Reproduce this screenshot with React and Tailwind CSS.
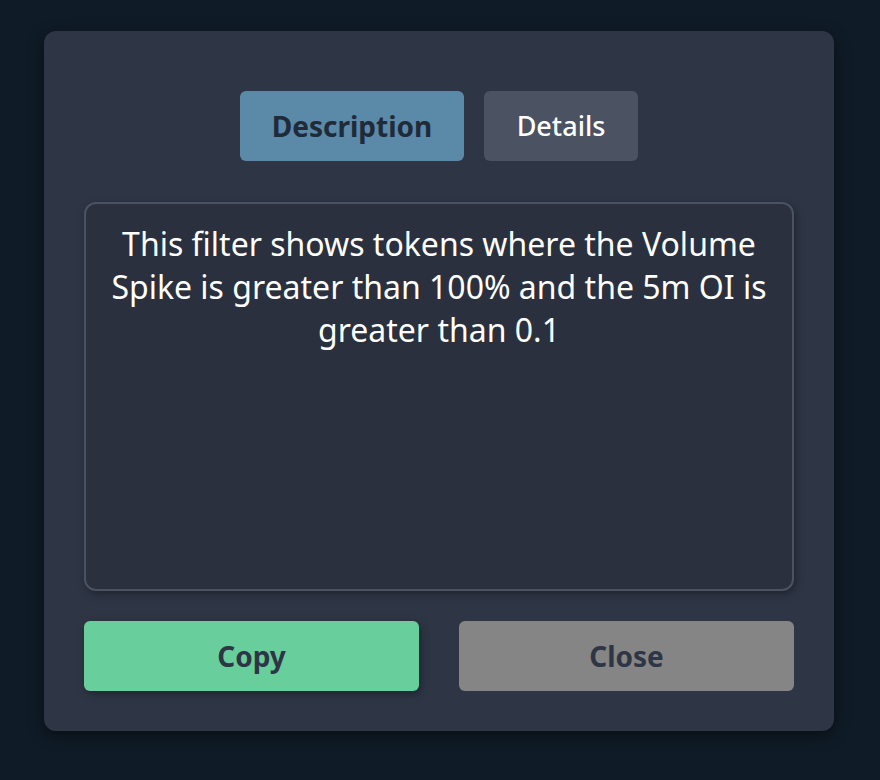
const App = () => {
  return (
    <div className="min-h-[780px] w-full bg-[#0f1b26] pt-[31px] pl-[44px]" style={{ fontFamily: '"Noto Sans", "Open Sans", sans-serif' }}>
      <div className="w-[790px] h-[700px] rounded-[12px] bg-[#2e3646] shadow-[0_4px_16px_rgba(0,0,0,0.45)] px-[40px] pt-[60px] pb-[40px] flex flex-col">
        {/* Tabs */}
        <div className="flex justify-center gap-[20px]">
          <button className="h-[70px] w-[224px] rounded-[6px] bg-[#5b89a8] text-[28px] font-bold text-[#1f2b38]">
            Description
          </button>
          <button className="h-[70px] w-[154px] rounded-[6px] bg-[#4b5262] text-[27px] font-medium text-white">
            Details
          </button>
        </div>

        {/* Description box */}
        <div className="mt-[41px] h-[389px] rounded-[12px] border-2 border-[#4b5262] bg-[#2a303d] shadow-[2px_3px_8px_rgba(0,0,0,0.35)] px-[8px] pt-[18px]">
          <p className="text-center text-[32px] leading-[43px] text-white">
            This filter shows tokens where the Volume Spike is greater than 100% and the 5m OI is greater than 0.1
          </p>
        </div>

        {/* Actions */}
        <div className="mt-[30px] grid grid-cols-2 gap-[40px]">
          <button className="h-[70px] rounded-[6px] bg-[#68cf9c] shadow-[2px_3px_8px_rgba(0,0,0,0.35)] text-[28px] font-bold text-[#2e3646]">
            Copy
          </button>
          <button className="h-[70px] rounded-[6px] bg-[#858585] text-[28px] font-bold text-[#2e3646]">
            Close
          </button>
        </div>
      </div>
    </div>
  );
};

export default App;
